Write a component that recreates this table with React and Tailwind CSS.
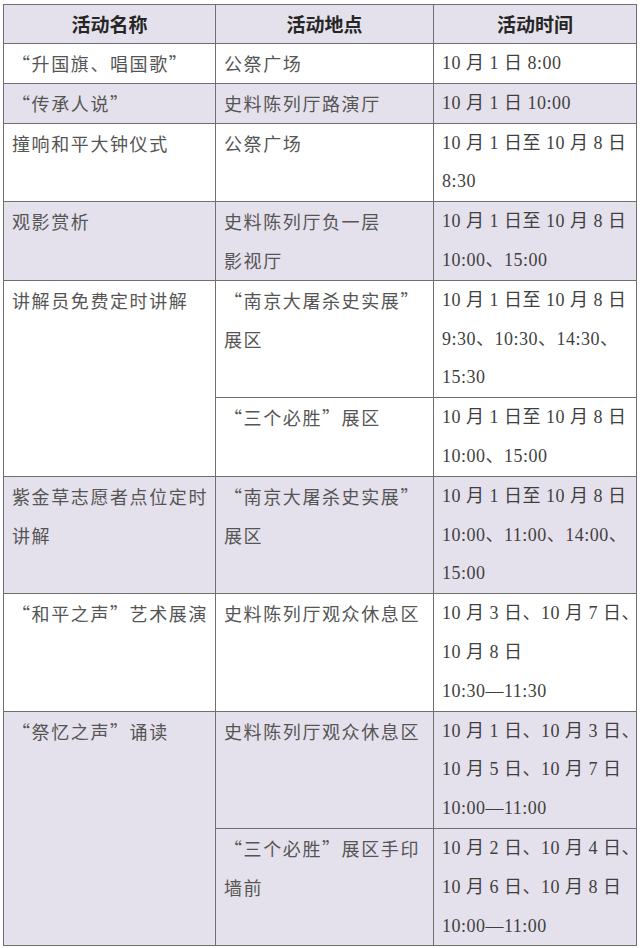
import React from "react";

const cjk = { fontFamily: '"Noto Sans CJK SC", sans-serif' };
const serif = { fontFamily: '"Liberation Serif", "Noto Sans CJK SC", serif' };

function Th({ children }) {
  return (
    <th
      className="border border-[#6f6f6f] bg-[#e5e1ec] text-center font-bold text-[19px] leading-[38px] text-[#262626]"
      style={cjk}
    >
      {children}
    </th>
  );
}

function Td({ children, rowSpan, purple, time }) {
  return (
    <td
      rowSpan={rowSpan}
      className={
        "border border-[#6f6f6f] align-top pl-[8px] pr-0 text-[18px] leading-[38.8px] whitespace-nowrap overflow-visible " +
        (purple ? "bg-[#e5e1ec] " : "bg-white ") +
        (time ? "tracking-[0.5px] text-[#3f3f3f]" : "tracking-[1.6px] text-[#555555]")
      }
      style={time ? serif : cjk}
    >
      {children}
    </td>
  );
}

export default function App() {
  return (
    <div className="w-[640px] h-[948px] bg-white pt-[4px] pl-[3px] overflow-hidden">
      <table className="border-collapse table-fixed w-[633px]">
        <colgroup>
          <col className="w-[212px]" />
          <col className="w-[218px]" />
          <col className="w-[203px]" />
        </colgroup>
        <thead>
          <tr>
            <Th>活动名称</Th>
            <Th>活动地点</Th>
            <Th>活动时间</Th>
          </tr>
        </thead>
        <tbody>
          <tr>
            <Td>“升国旗、唱国歌”</Td>
            <Td>公祭广场</Td>
            <Td time>10 月 1 日 8:00</Td>
          </tr>
          <tr>
            <Td purple>“传承人说”</Td>
            <Td purple>史料陈列厅路演厅</Td>
            <Td purple time>10 月 1 日 10:00</Td>
          </tr>
          <tr>
            <Td>撞响和平大钟仪式</Td>
            <Td>公祭广场</Td>
            <Td time>
              10 月 1 日至 10 月 8 日<br />8:30
            </Td>
          </tr>
          <tr>
            <Td purple>观影赏析</Td>
            <Td purple>
              史料陈列厅负一层<br />影视厅
            </Td>
            <Td purple time>
              10 月 1 日至 10 月 8 日<br />10:00、15:00
            </Td>
          </tr>
          <tr>
            <Td rowSpan={2}>讲解员免费定时讲解</Td>
            <Td>
              “南京大屠杀史实展”<br />展区
            </Td>
            <Td time>
              10 月 1 日至 10 月 8 日<br />9:30、10:30、14:30、<br />15:30
            </Td>
          </tr>
          <tr>
            <Td>“三个必胜”展区</Td>
            <Td time>
              10 月 1 日至 10 月 8 日<br />10:00、15:00
            </Td>
          </tr>
          <tr>
            <Td purple>
              紫金草志愿者点位定时<br />讲解
            </Td>
            <Td purple>
              “南京大屠杀史实展”<br />展区
            </Td>
            <Td purple time>
              10 月 1 日至 10 月 8 日<br />10:00、11:00、14:00、<br />15:00
            </Td>
          </tr>
          <tr>
            <Td>“和平之声”艺术展演</Td>
            <Td>史料陈列厅观众休息区</Td>
            <Td time>
              10 月 3 日、10 月 7 日、<br />10 月 8 日<br />10:30—11:30
            </Td>
          </tr>
          <tr>
            <Td purple rowSpan={2}>“祭忆之声”诵读</Td>
            <Td purple>史料陈列厅观众休息区</Td>
            <Td purple time>
              10 月 1 日、10 月 3 日、<br />10 月 5 日、10 月 7 日<br />10:00—11:00
            </Td>
          </tr>
          <tr>
            <Td purple>
              “三个必胜”展区手印<br />墙前
            </Td>
            <Td purple time>
              10 月 2 日、10 月 4 日、<br />10 月 6 日、10 月 8 日<br />10:00—11:00
            </Td>
          </tr>
        </tbody>
      </table>
    </div>
  );
}
